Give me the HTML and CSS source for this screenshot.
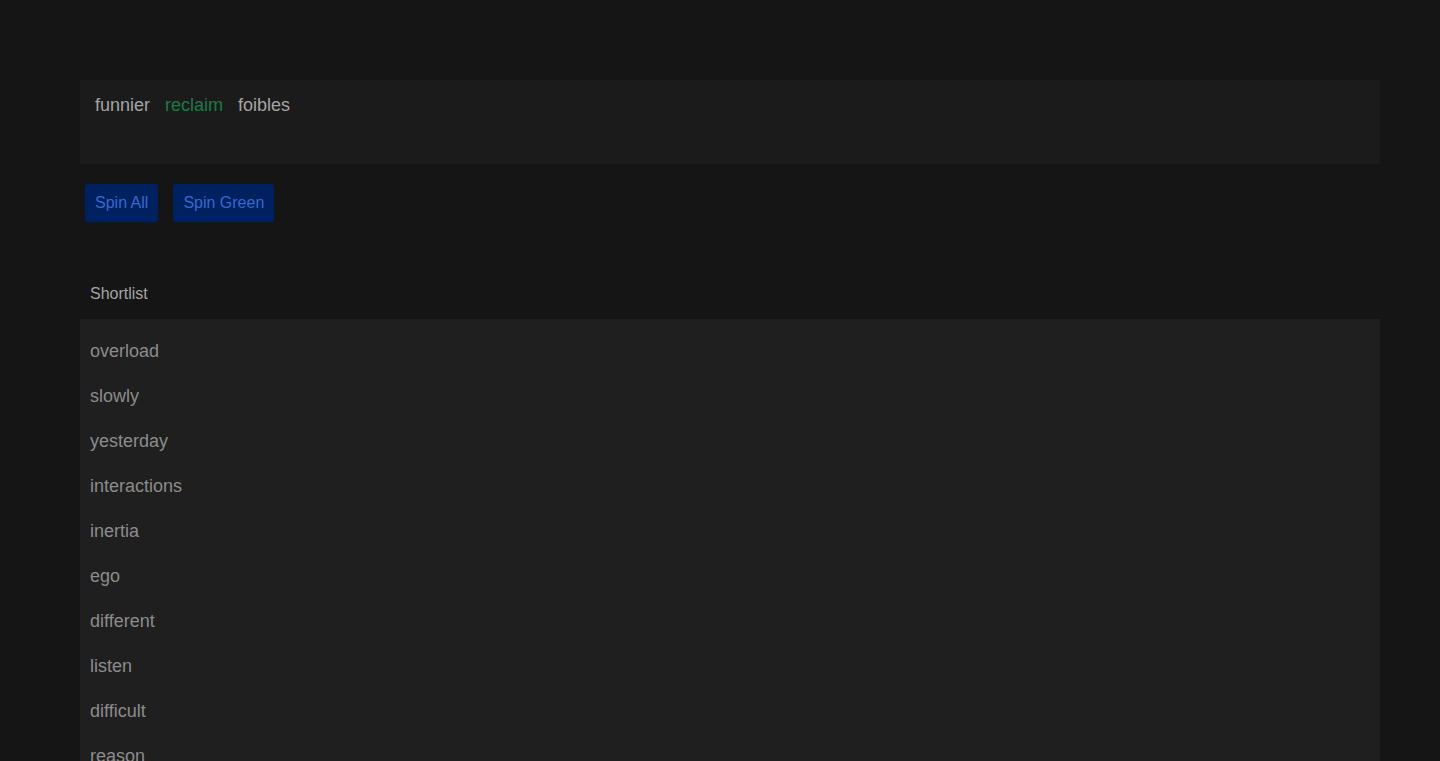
FILE: index.html
```html
<!DOCTYPE html>
<html lang="en">
<head>
  <meta charset="UTF-8">
  <title>Word Spinner</title>
  <link rel="stylesheet" href="styles.css">
</head>
<body>

  <div class="wrap">
    <div class="words">
      <span class="word">funnier</span>
      <span class="word green">reclaim</span>
      <span class="word">foibles</span>
    </div>

    <div class="controls">
      <button>Spin All</button>
      <button>Spin Green</button>
    </div>

    <div class="list-title">Shortlist</div>
    <ul class="shortlist">
      <li>overload</li>
      <li>slowly</li>
      <li>yesterday</li>
      <li>interactions</li>
      <li>inertia</li>
      <li>ego</li>
      <li>different</li>
      <li>listen</li>
      <li>difficult</li>
      <li>reason</li>
    </ul>
  </div>

</body>
</html>
```

FILE: styles.css
```css
body {
  margin: 0;
  background: #151515;
  font-family: "Liberation Sans", Arial, sans-serif;
  color: #a8a8a8;
}
.wrap {
  width: 1300px;
  margin: 0 60px 0 80px;
  padding-top: 80px;
}
.words {
  display: flex;
  gap: 15px;
  background: #1b1b1b;
  padding: 15px 15px 13px;
  height: 56px;
  font-size: 18px;
  line-height: 21px;
}
.word {
  color: #a4a4a4;
}
.green {
  color: #1d7a48;
}
.controls {
  display: flex;
  gap: 15px;
  padding: 20px 5px 0;
}
button {
  font-family: inherit;
  font-size: 16px;
  line-height: 18px;
  padding: 10px 10px;
  background: #00215f;
  color: #3768d0;
  border: none;
  border-radius: 3px;
  cursor: pointer;
}
.list-title {
  margin-top: 55px;
  padding: 8px 10px;
  font-size: 16px;
  line-height: 18px;
  color: #a4a4a4;
}
.shortlist {
  list-style: none;
  margin: 8px 0 0;
  padding: 12px 10px 0;
  background: #1f1f1f;
}
.shortlist li {
  font-size: 18px;
  line-height: 21px;
  padding: 10px 0 14px;
  color: #8c8c8c;
}
```
